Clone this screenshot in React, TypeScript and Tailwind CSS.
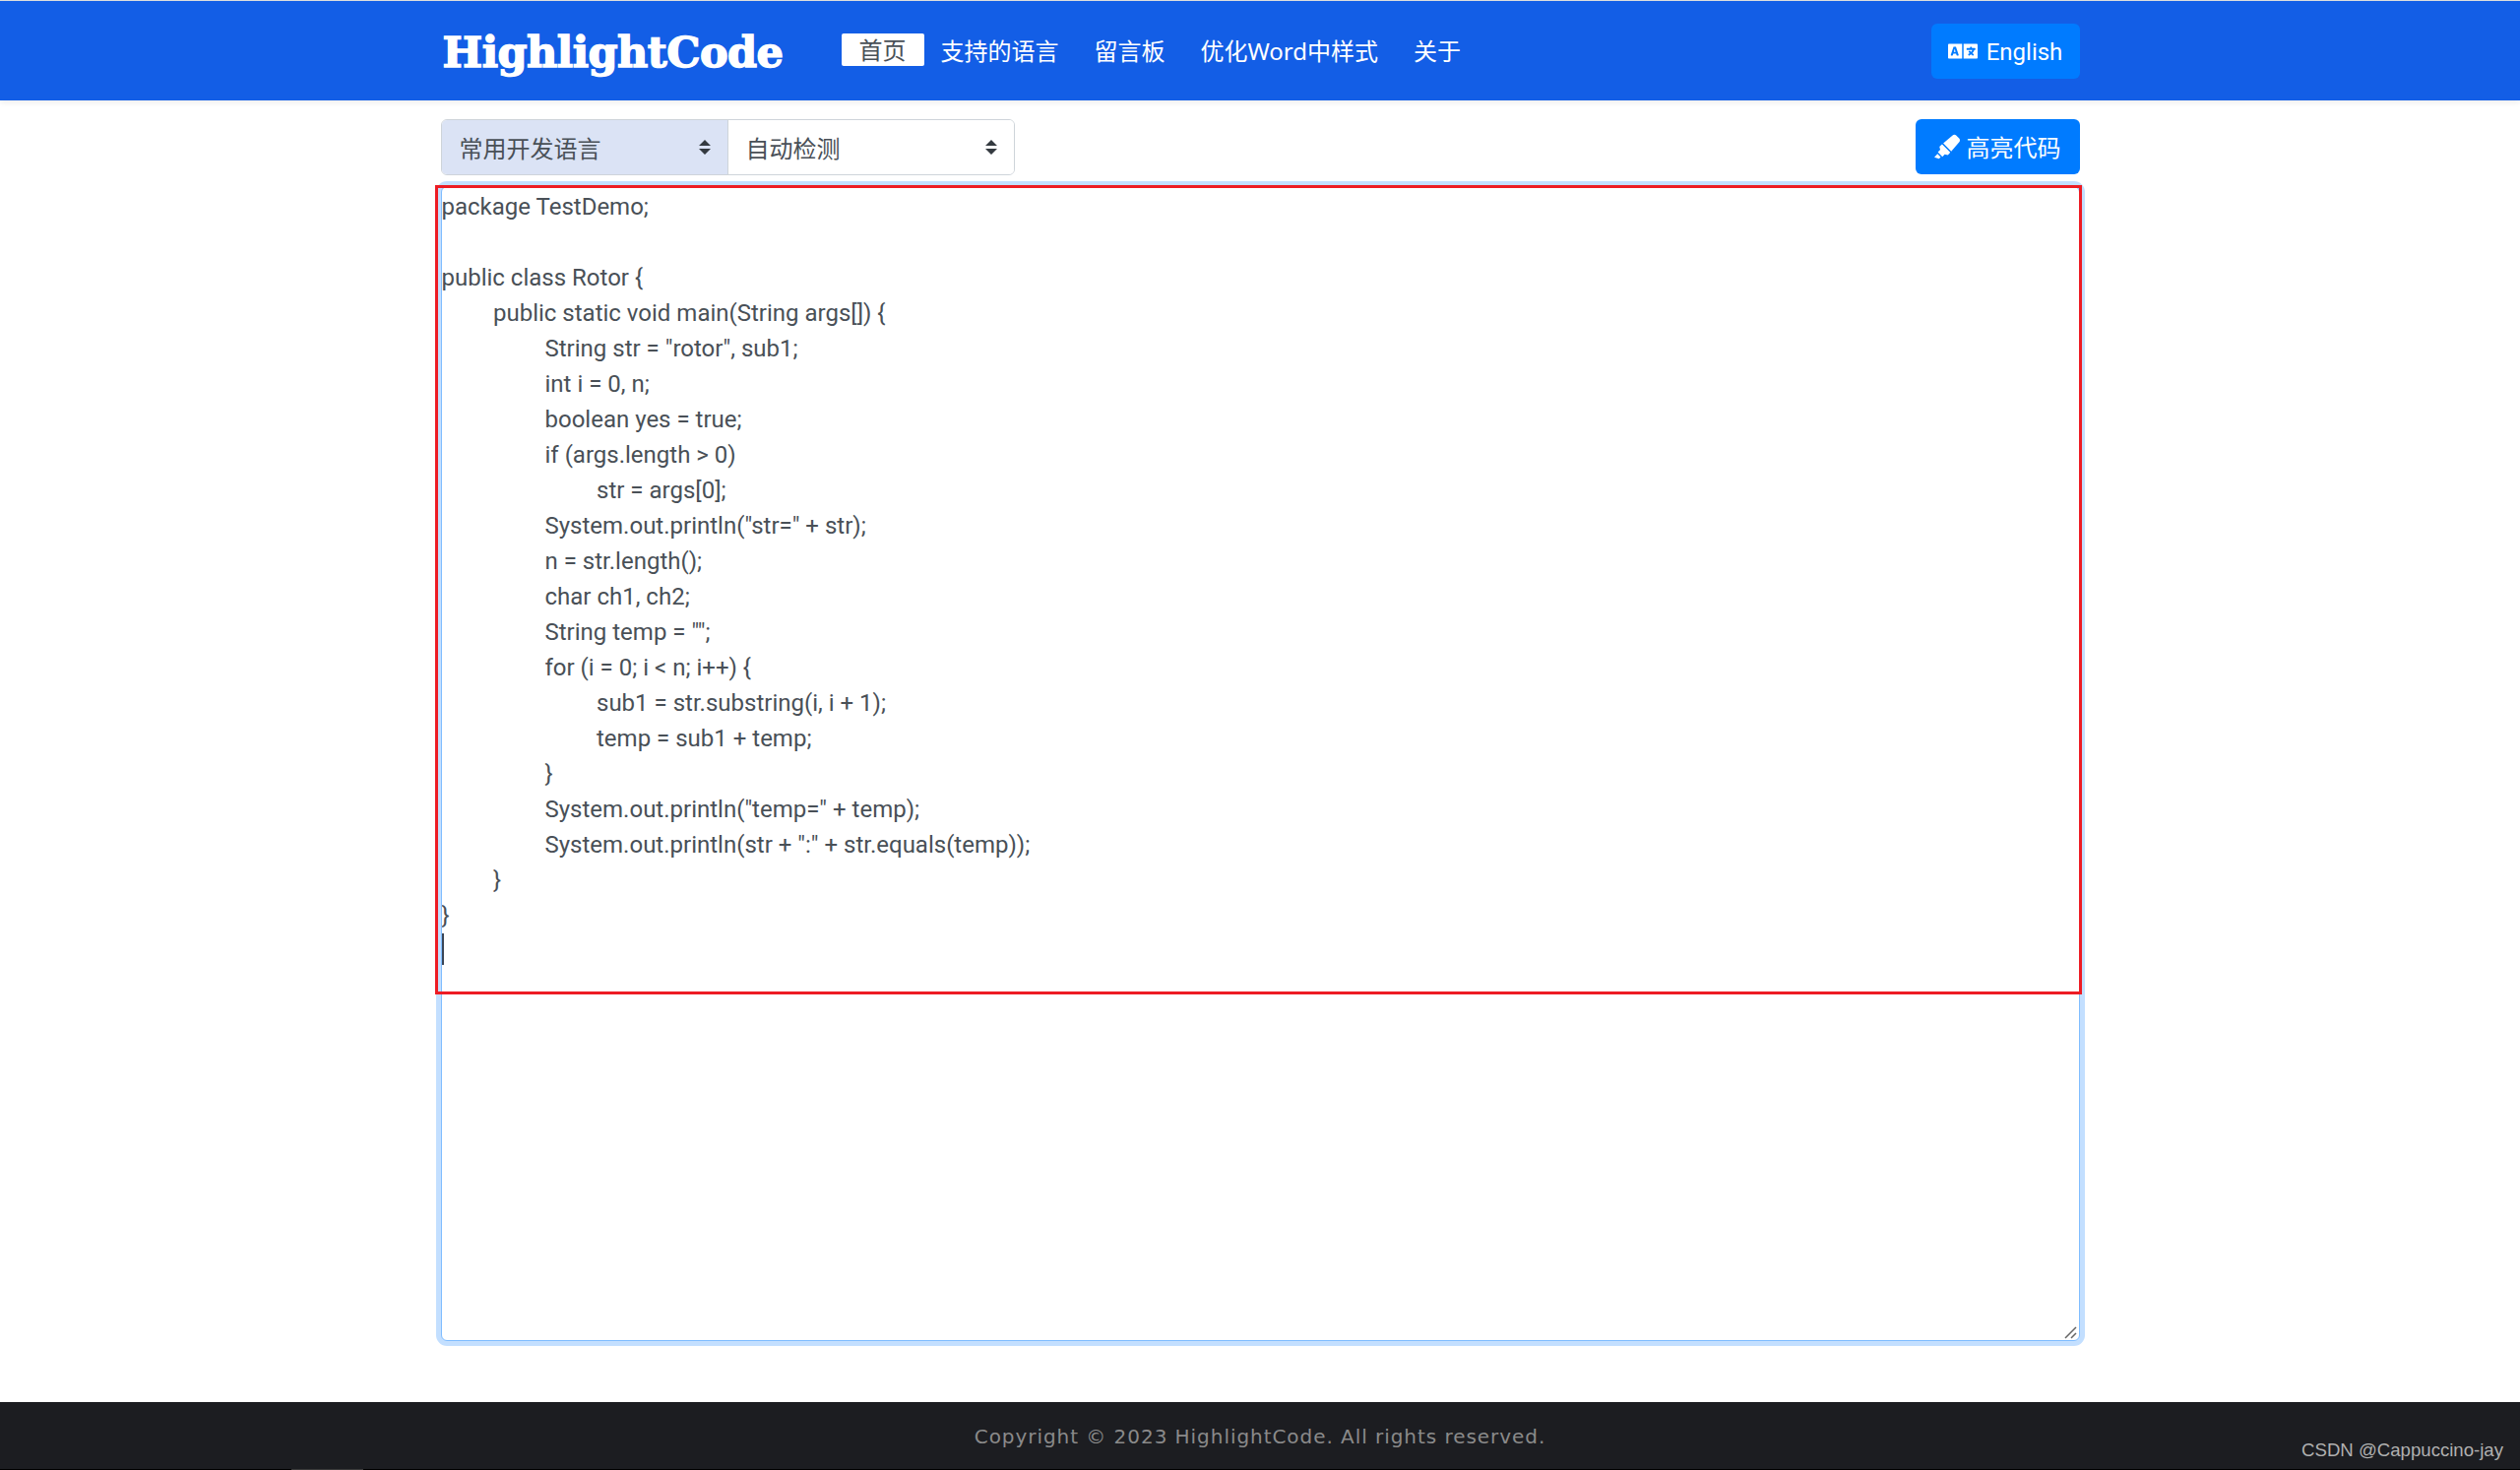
import { FaLanguage, FaHighlighter } from "react-icons/fa";

const code = `package TestDemo;

public class Rotor {
	public static void main(String args[]) {
		String str = "rotor", sub1;
		int i = 0, n;
		boolean yes = true;
		if (args.length > 0)
			str = args[0];
		System.out.println("str=" + str);
		n = str.length();
		char ch1, ch2;
		String temp = "";
		for (i = 0; i < n; i++) {
			sub1 = str.substring(i, i + 1);
			temp = sub1 + temp;
		}
		System.out.println("temp=" + temp);
		System.out.println(str + ":" + str.equals(temp));
	}
}
`;

const sans = "font-['Roboto','Noto_Sans_CJK_SC',sans-serif]";

function Arrows() {
  return (
    <svg width="12" height="15" viewBox="0 0 12 15" className="pointer-events-none absolute right-[17px] top-[20px] fill-[#343a40]">
      <path d="M6 0 L12 6 H0 Z M0 9 H12 L6 15 Z" />
    </svg>
  );
}

export default function App() {
  return (
    <div className={`flex h-[1493px] flex-col bg-white ${sans} text-[24px] leading-[36px] text-[#495057]`}>
      <header className="h-[102px] shrink-0 border-t border-[#dddddd] bg-[#135ee6] shadow-[0_2px_6px_rgba(0,0,0,0.08)]">
        <div className="mx-auto flex h-full w-[1665px] items-center">
          <div className="mt-[3px] ml-[2px] w-[405px] font-['DejaVu_Serif',serif] text-[43px] font-bold leading-none tracking-[-0.5px] text-white [-webkit-text-stroke:1.5px_#fff]">
            HighlightCode
          </div>
          <nav className="flex items-center text-white">
            <a className="mb-[2px] flex h-[33px] w-[84px] items-center justify-center rounded-[2px] bg-white pt-[2px] text-[#495057]">首页</a>
            <a className="mt-[2px] ml-[17px]">支持的语言</a>
            <a className="mt-[2px] ml-[36px]">留言板</a>
            <a className="mt-[2px] ml-[36px]">优化<span className="font-['Noto_Sans',sans-serif]">Word</span>中样式</a>
            <a className="mt-[2px] ml-[36px]">关于</a>
          </nav>
          <button className="ml-auto flex h-[56px] w-[151px] items-center justify-center gap-[9px] rounded-[6px] bg-[#007bff] text-white">
            <FaLanguage size={30} />
            <span className="mt-[2px]">English</span>
          </button>
        </div>
      </header>

      <main className="mx-auto flex w-[1665px] flex-1 flex-col pt-[19px]">
        <div className="flex h-[57px] items-stretch justify-between">
          <div className="flex w-[583px] overflow-hidden rounded-[6px] border border-[#ced4da]">
            <div className="relative w-[291px] border-r border-[#ced4da] bg-[#dbe3f5]">
              <select className="h-full w-full appearance-none bg-transparent pt-[4px] pl-[18px] outline-none">
                <option>常用开发语言</option>
              </select>
              <Arrows />
            </div>
            <div className="relative flex-1 bg-white">
              <select className="h-full w-full appearance-none bg-transparent pt-[4px] pl-[18px] outline-none">
                <option>自动检测</option>
              </select>
              <Arrows />
            </div>
          </div>
          <button className="flex h-[56px] w-[167px] items-center justify-center gap-[7px] rounded-[6px] bg-[#007bff] text-white">
            <FaHighlighter size={26} />
            <span className="mt-[4px]">高亮代码</span>
          </button>
        </div>

        <div className="relative mt-[11px]">
          <textarea
            readOnly
            defaultValue={code}
            className="block h-[1173px] w-full resize-none rounded-[6px] border border-[#80bdff] bg-white pt-[2px] pb-[1px] whitespace-pre text-[#495057] shadow-[0_0_0_5px_#c3dfff] outline-none [tab-size:52.5px]"
          />
          <div className="pointer-events-none absolute -left-[6px] -top-[1px] h-[822px] w-[1673px] border-[3px] border-[#ed1c24]" />
          <div className="absolute left-[1px] top-[759px] h-[32px] w-[2px] bg-[#3c4656]" />
          <svg width="13" height="13" viewBox="0 0 13 13" className="absolute right-[3px] bottom-[2px] stroke-[#666666] stroke-[1.5]">
            <path d="M1 12 L12 1 M7 12 L12 7" />
          </svg>
        </div>
      </main>

      <footer className="relative flex h-[69px] shrink-0 items-center justify-center border-b border-black bg-[#1c1d21] font-['DejaVu_Sans',sans-serif] text-[20px] tracking-[0.95px] text-[#8a8a8a]">
        <span className="mt-[2px]">Copyright © 2023 HighlightCode. All rights reserved.</span>
        <span className="absolute right-[17px] top-[35px] font-['Liberation_Sans',sans-serif] text-[18.6px] leading-[28px] tracking-normal text-[#b0b0b0]">
          CSDN @Cappuccino-jay
        </span>
        <div className="absolute -bottom-px left-[296px] h-px w-[73px] bg-[#3a3a3a]" />
      </footer>
    </div>
  );
}
